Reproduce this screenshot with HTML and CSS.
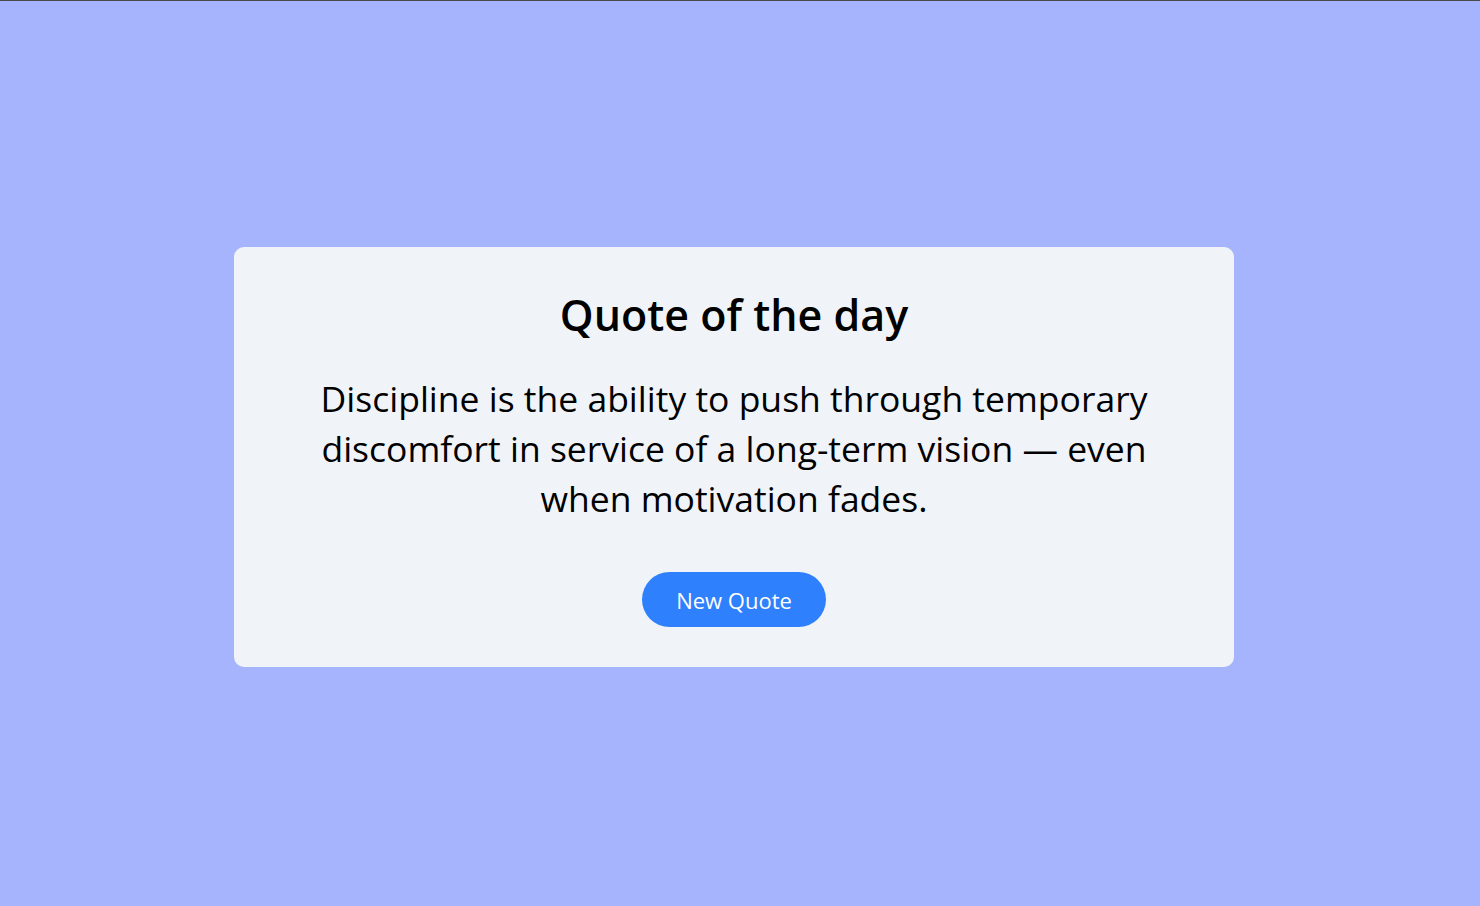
FILE: index.html
```html
<!DOCTYPE html>
<html lang="en">
<head>
<meta charset="utf-8">
<title>Quote of the day</title>
<link rel="stylesheet" href="styles.css">
</head>
<body>
<div class="topline"></div>
<main class="page">
  <section class="card">
    <h1 class="title">Quote of the day</h1>
    <p class="quote">Discipline is the ability to push through temporary discomfort in service of a long-term vision — even when motivation fades.</p>
    <button class="btn">New Quote</button>
  </section>
</main>
</body>
</html>
```
FILE: styles.css
```css
html, body {
  margin: 0;
  padding: 0;
  height: 100%;
}
body {
  background: #a5b4fc;
  font-family: "Open Sans", "Noto Sans", sans-serif;
  color: #000;
  overflow: hidden;
}
.topline {
  height: 1px;
  background: #4a4a4a;
}
.page {
  box-sizing: border-box;
  height: 905px;
  padding: 7px 12px 0 0;
  display: flex;
  align-items: center;
  justify-content: center;
}
.card {
  width: 1000px;
  height: 420px;
  box-sizing: border-box;
  background: #f0f4f9;
  border-radius: 10px;
  padding: 40px 60px;
  display: flex;
  flex-direction: column;
  align-items: center;
  text-align: center;
}
.title {
  margin: 0;
  font-size: 43px;
  font-weight: 600;
  line-height: 56px;
}
.quote {
  margin: 30px 0 0;
  font-size: 35.5px;
  line-height: 50px;
  font-weight: 400;
  max-width: 860px;
}
.btn {
  margin-top: 49px;
  width: 184px;
  height: 55px;
  border: none;
  border-radius: 28px;
  background: #2e80fd;
  color: #fff;
  font-family: inherit;
  font-size: 22px;
}
```
